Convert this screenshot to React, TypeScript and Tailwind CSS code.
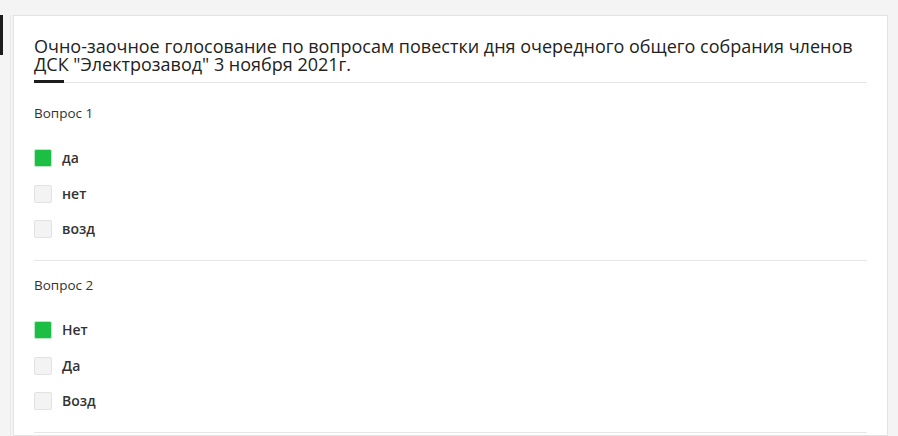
import React from 'react'

type Option = { label: string; checked?: boolean }
type Question = { title: string; options: Option[] }

const questions: Question[] = [
  {
    title: 'Вопрос 1',
    options: [{ label: 'да', checked: true }, { label: 'нет' }, { label: 'возд' }],
  },
  {
    title: 'Вопрос 2',
    options: [{ label: 'Нет', checked: true }, { label: 'Да' }, { label: 'Возд' }],
  },
]

function Checkbox({ checked }: { checked?: boolean }) {
  return (
    <span
      className={
        checked
          ? 'block w-[18px] h-[18px] rounded-[2px] bg-[#1cbf43] border border-[#b9e8c4]'
          : 'block w-[18px] h-[18px] rounded-[2px] bg-[#f3f3f3] border border-[#e2e2e2]'
      }
    />
  )
}

function QuestionBlock({ q }: { q: Question }) {
  return (
    <div className="border-b border-[#e6e6e6] pb-[22px]">
      <div className="pt-[15px] text-[13.5px] leading-[18px] text-[#333]">{q.title}</div>
      <div className="mt-[27px] flex flex-col gap-[17.5px]">
        {q.options.map((o) => (
          <label key={o.label} className="flex items-center gap-[10px] h-[18px]">
            <Checkbox checked={o.checked} />
            <span className="text-[14px] leading-[18px] font-semibold text-[#333]">{o.label}</span>
          </label>
        ))}
      </div>
    </div>
  )
}

export default function App() {
  return (
    <div
      className="h-[436px] overflow-hidden bg-[#f4f4f4] flex"
      style={{ fontFamily: '"Open Sans", "Noto Sans", sans-serif' }}
    >
      {/* sidebar stub */}
      <div className="w-[13px] shrink-0 pt-[15px] flex">
        <div className="w-[3px] h-[40px] bg-[#1c1c1c]" />
        <div className="ml-[7px] w-px h-full bg-[#e8e8e8]" />
      </div>
      <div className="w-[875px] shrink-0 mt-[15px] bg-white border border-[#e3e3e3] px-[20px] pt-[21px]">
        <div className="relative border-b border-[#e6e6e6] pb-[9px]">
          <h1 className="text-[18px] leading-[18px] text-[#222] font-normal">
            Очно-заочное голосование по вопросам повестки дня очередного общего собрания членов ДСК "Электрозавод" 3 ноября 2021г.
          </h1>
          <span className="absolute left-0 bottom-[-1px] w-[30px] h-[3px] bg-[#1c1c1c]" />
        </div>
        <div className="pt-[6px]">
          {questions.map((q) => (
            <QuestionBlock key={q.title} q={q} />
          ))}
        </div>
      </div>
    </div>
  )
}
